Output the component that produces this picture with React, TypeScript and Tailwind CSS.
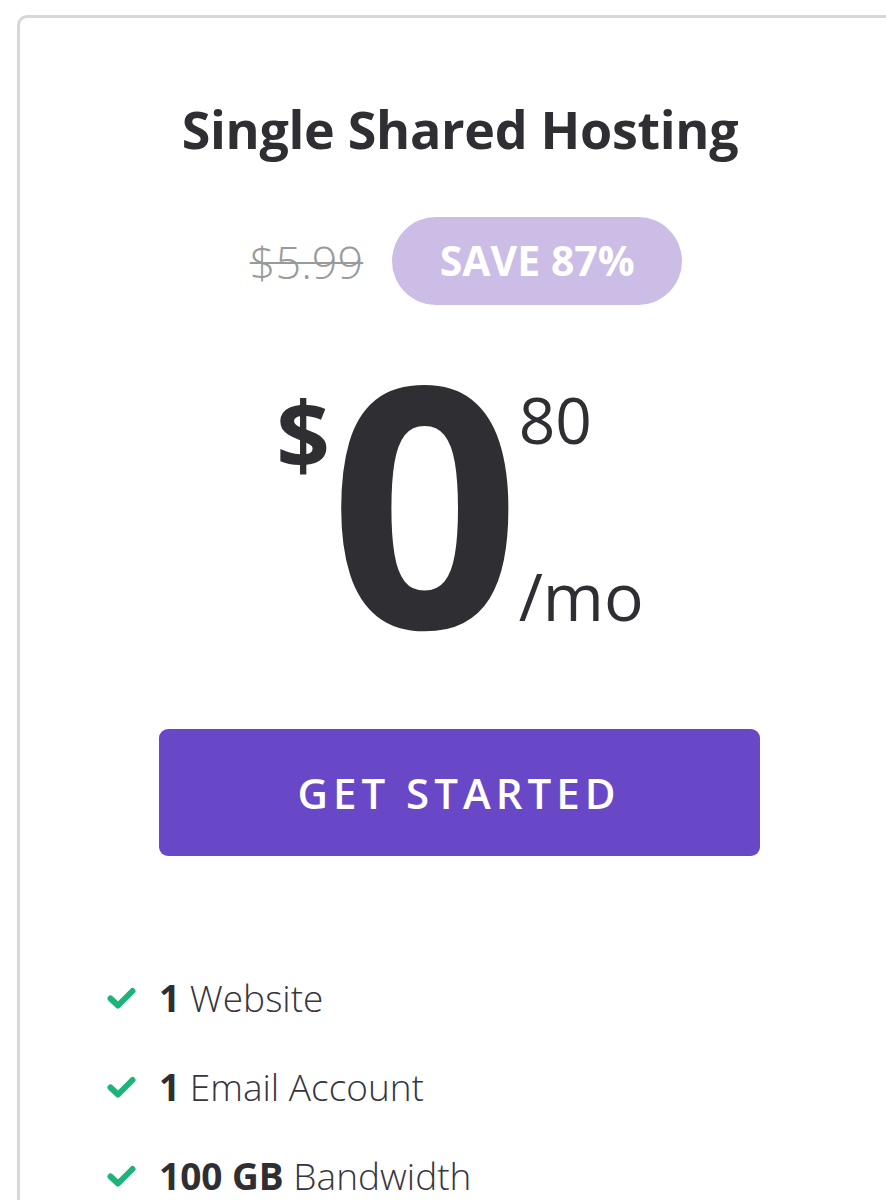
import React from "react";

function Check() {
  return (
    <svg width="29" height="22" viewBox="0 0 29 22" className="shrink-0">
      <path d="M3.5 11.5 L11 18.5 L25.5 4" fill="none" stroke="#1db47a" strokeWidth="6" strokeLinecap="round" strokeLinejoin="round" />
    </svg>
  );
}

const features: { b: string; t: string }[] = [
  { b: "1", t: "Website" },
  { b: "1", t: "Email Account" },
  { b: "100 GB", t: "Bandwidth" },
];

export default function App() {
  return (
    <div
      className="w-[886px] h-[1200px] overflow-hidden bg-white pt-[15px] pl-[17px]"
      style={{ fontFamily: '"Open Sans", "Noto Sans", sans-serif' }}
    >
      <div className="w-[886px] h-[1300px] border-[3px] border-[#d7d7d7] rounded-[10px] bg-white flex flex-col items-center">
        <h1 className="mt-[85px] text-[52px] leading-none font-bold text-[#2f2e33] tracking-[-0.3px]">
          Single Shared Hosting
        </h1>
        <div className="mt-[62px] flex items-center gap-[29px] pl-[12px]">
          <span className="text-[45px] font-light text-[#9a9a9a] line-through decoration-[2px] leading-none">$5.99</span>
          <span className="w-[290px] h-[88px] rounded-full bg-[#cbbde6] text-white font-bold text-[41px] flex items-center justify-center">
            SAVE 87%
          </span>
        </div>
        <div className="mt-[30px] flex items-start text-[#2f2e33]">
          <span className="text-[94px] font-bold leading-none mt-[51px] mr-[-1px]">$</span>
          <span className="text-[335px] font-bold leading-[335px] h-[300px] -mt-[4px]">0</span>
          <div className="flex flex-col ml-[-2px] mt-[53px] h-[240px] justify-between">
            <span className="text-[64px] leading-none">80</span>
            <span className="text-[66px] leading-none">/mo</span>
          </div>
        </div>
        <button className="mt-[98px] w-[601px] h-[127px] rounded-[9px] bg-[#6848c7] text-white font-semibold text-[42px] tracking-[5px] -ml-[2px]">
          GET STARTED
        </button>
        <ul className="self-start mt-[118px] ml-[87px] flex flex-col gap-[41px]">
          {features.map((f, i) => (
            <li key={i} className="flex items-center gap-[23px] text-[37px] leading-[48px] font-light text-[#36353d]">
              <Check />
              <span>
                <b className="font-bold text-[#2f2e33]">{f.b}</b> {f.t}
              </span>
            </li>
          ))}
        </ul>
      </div>
    </div>
  );
}
